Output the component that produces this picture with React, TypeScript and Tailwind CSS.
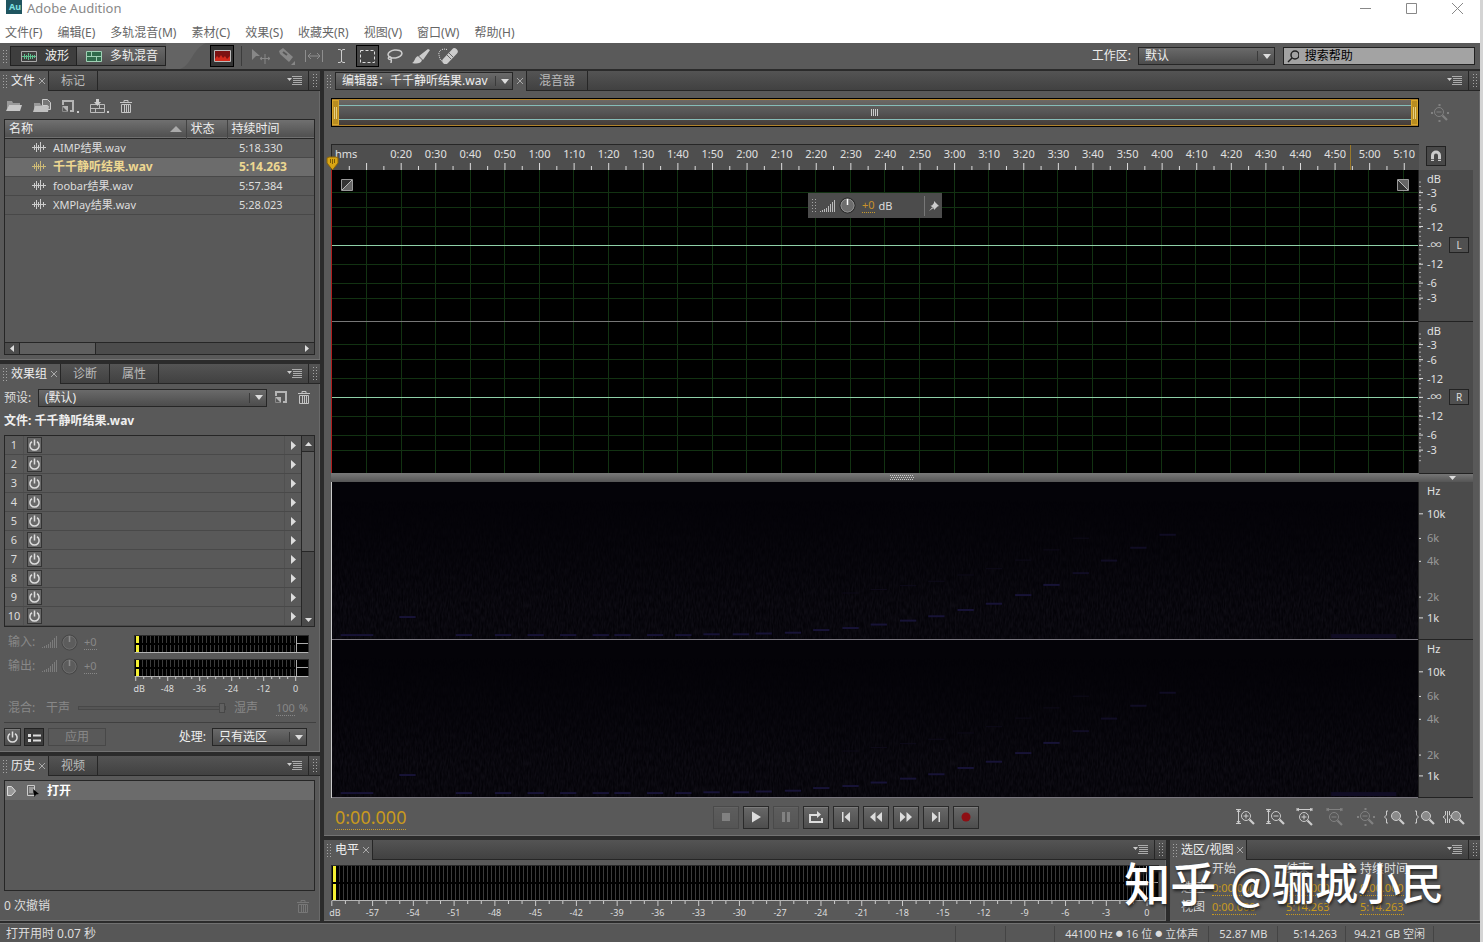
import type { ReactNode } from "react";

const files = [
    { name: "AIMP结果.wav", time: "5:18.330" },
    { name: "千千静听结果.wav", time: "5:14.263", active: true },
    { name: "foobar结果.wav", time: "5:57.384" },
    { name: "XMPlay结果.wav", time: "5:28.023" },
];

const menus = ["文件(F)", "编辑(E)", "多轨混音(M)", "素材(C)", "效果(S)", "收藏夹(R)", "视图(V)", "窗口(W)", "帮助(H)"];

const DURATION = 314.263;
const ticks = Array.from({ length: 62 }, (_, i) => (i + 1) * 5);
const pct = (n: number) => `${n}%`;
const at = (sec: number) => pct((sec / DURATION) * 100);
const clock = (sec: number) => `${Math.floor(sec / 60)}:${String(sec % 60).padStart(2, "0")}`;

// offsets are percentages of one channel's height
const dbMarks = [
    { y: 6, label: "dB" },
    { y: 15, label: "-3" },
    { y: 25, label: "-6" },
    { y: 37.5, label: "-12" },
    { y: 50, label: "-∞" },
    { y: 62.5, label: "-12" },
    { y: 75, label: "-6" },
    { y: 85, label: "-3" },
];
const hzMarks = [
    { y: 5.7, label: "Hz" },
    { y: 20.3, label: "10k" },
    { y: 36, label: "6k", dim: true },
    { y: 50.6, label: "4k", dim: true },
    { y: 73.4, label: "2k", dim: true },
    { y: 86.7, label: "1k" },
];

// [x %, y %] of the tones in the spectrogram
const tones = [
    [0.8, 97], [2.3, 97], [6.2, 85.5], [11.4, 97], [15, 97], [18, 97], [21, 97], [24, 97], [26, 97], [29, 97],
    [31.6, 97], [34.2, 96.5], [36.9, 96.5], [39, 96], [41.7, 95.5], [44.3, 93.8], [47, 92.5], [49.6, 90.3],
    [52.3, 87.8], [54.9, 85], [57.6, 81], [60.2, 77], [62.9, 71.5], [65.5, 65], [68.2, 57.5], [70.8, 49.5],
    [73.5, 41.3], [76.2, 33],
];

const selectLook = "appearance-none border border-[#262626] bg-linear-to-b from-[#6a6a6a] to-[#4c4c4c] text-[#eee] outline-none";
const buttonLook = "flex items-center justify-center border border-[#2a2a2a] bg-linear-to-b from-[#686868] to-[#4d4d4d] shadow-[inset_0_1px_0_#7c7c7c]";

function Grip() {
    return (
        <svg width="4" height="13" className="shrink-0" aria-hidden="true">
            {[0, 3, 6, 9, 12].map((y) => (
                <g key={y} fill="#a5a5a5">
                    <rect x="0" y={y} width="1" height="1" />
                    <rect x="3" y={y} width="1" height="1" />
                </g>
            ))}
        </svg>
    );
}

function Down() {
    return (
        <span className="pointer-events-none absolute inset-y-1 right-0 flex w-[18px] items-center justify-center border-l border-[#3a3a3a]">
            <svg width="8" height="5" aria-hidden="true"><path d="M0 0h8L4 5z" fill="#ddd" /></svg>
        </span>
    );
}

function Dropdown({ label, value, className }: { label: string; value: string; className: string }) {
    return (
        <div className={`relative ${className}`}>
            <select aria-label={label} className={`${selectLook} h-[18px] w-full pr-4 pl-1.5`}>
                <option>{value}</option>
            </select>
            <Down />
        </div>
    );
}

function TabBar({ active, rest, children }: { active: string; rest: string[]; children?: ReactNode }) {
    return (
        <div className="flex h-5 shrink-0 items-stretch border-b border-[#262626] bg-linear-to-b from-[#545454] to-[#414141]">
            <div className="-mb-px flex items-center gap-1 border-r border-[#262626] bg-[#595959] pr-[3px] pl-[3px]">
                <Grip />
                {children ?? <button className="text-[#eee]">{active}</button>}
                <button aria-label="关闭">
                    <svg width="6" height="6" stroke="#aaa"><path d="M0 0l6 6M6 0L0 6" /></svg>
                </button>
            </div>
            {rest.map((tab) => (
                <button key={tab} className="border-r border-[#262626] px-3 text-[#bbb]">{tab}</button>
            ))}
            <button aria-label="面板菜单" className="mr-1.5 ml-auto">
                <svg width="15" height="9" stroke="#ccc"><path d="M5 .5h10M6 2.500h9M6 4.500h9M6 6.500h9M5 8.500h10" opacity=".75" /><path d="M0 2h5L2.500 5z" fill="#ccc" stroke="none" /></svg>
            </button>
            <div className="flex w-3 items-center justify-center border-l border-[#262626]"><Grip /></div>
        </div>
    );
}

function Panel({ children, className = "" }: { children: ReactNode; className?: string }) {
    return <section className={`flex flex-col bg-[#595959] shadow-[inset_0_-1px_0_#737373,inset_-1px_0_0_#6a6a6a] ${className}`}>{children}</section>;
}

function Power() {
    return (
        <svg width="13" height="13" fill="none" stroke="#ddd" strokeWidth="1.500" aria-hidden="true">
            <path d="M4 2.600a4.600 4.600 0 1 0 5 0M6.500 0.500v6" />
        </svg>
    );
}

function Trash({ dim }: { dim?: boolean }) {
    return (
        <svg width="12" height="13" fill="none" stroke={dim ? "#777" : "#c4c4c4"} aria-hidden="true">
            <path d="M0 2.500h12M4 2V.5h4V2M1.500 4.500h9v8h-9zM4.500 5v7M6.500 5v7M8.500 5v7" />
        </svg>
    );
}

function NewItem() {
    return (
        <svg width="13" height="13" aria-hidden="true">
            <path d="M0 0h12v12H8v-2h2V2H2v3H0z" fill="#b5b5b5" />
            <path d="M0 6h6v6z" fill="#b5b5b5" />
            <path d="M.5 6v5.500H6" fill="none" stroke="#8a8a8a" />
        </svg>
    );
}

function Wave({ color }: { color: string }) {
    return (
        <svg width="14" height="11" stroke={color} aria-hidden="true">
            <path d="M0 5.500h14M2.500 3v5M4.500 1v9M6.500 3v5M8.500 0v10M11.500 3v5" />
        </svg>
    );
}

function Bars({ color }: { color: string }) {
    return (
        <svg width="15" height="12" stroke={color} aria-hidden="true">
            <path d="M.5 12v-1M2.500 12v-2M4.500 12V9M6.500 12V8M8.500 12V6M10.500 12V4M12.500 12V2M14.500 12V0" />
        </svg>
    );
}

function Knob({ dim }: { dim?: boolean }) {
    return (
        <svg width="17" height="17" aria-hidden="true">
            <circle cx="8.500" cy="8.500" r="7.500" fill={dim ? "#5c5c5c" : "#6d6d6d"} stroke={dim ? "#444" : "#222"} />
            <circle cx="8.500" cy="8.500" r="6.500" fill="none" stroke={dim ? "#6c6c6c" : "#909090"} />
            <path d="M8.500 2v6" stroke={dim ? "#8c8c8c" : "#fff"} strokeWidth="1.500" />
        </svg>
    );
}

function Meter({ tall }: { tall?: boolean }) {
    const row = "relative bg-[repeating-linear-gradient(90deg,#000_0_3px,#3b3b3b_3px_4px)]";
    return (
        <div className="relative flex flex-col gap-0.5 border border-[#2a2a2a] border-b-[#b5b5b5] bg-black">
            {[0, 1].map((ch) => (
                <div key={ch} className={`${row} ${tall ? "h-4" : "h-[7px]"}`}>
                    <div className="ml-px h-full w-[3px] bg-[#f4f032]" />
                </div>
            ))}
            <div className="absolute inset-y-0 right-0 w-3 border-l border-[#aaa] bg-black">
                <div className="h-1/2 border-b border-[#aaa]" />
            </div>
        </div>
    );
}

function FilesPanel() {
    return (
        <Panel>
            <TabBar active="文件" rest={["标记"]} />
            <div className="flex h-7 items-center gap-[11px] pt-0.5 pl-1.5">
                <button aria-label="打开">
                    <svg width="16" height="12"><path d="M1 1h5l1 2h7v2H3l-2 5z" fill="#999" /><path d="M0 11l3-6h13l-2 6z" fill="#c8c8c8" /></svg>
                </button>
                <button aria-label="导入">
                    <svg width="18" height="14"><path d="M1 4h6l1 2h7v2H3l-2 4z" fill="#999" /><path d="M9.500.5h5l3 3v7h-3v-4h-5z" fill="#777" stroke="#ccc" /><path d="M0 13l2-6h14l-1 6z" fill="#c0c0c0" /></svg>
                </button>
                <button aria-label="新建" className="flex items-end gap-0.5">
                    <NewItem /><span className="h-0.5 w-0.5 bg-[#ccc]" />
                </button>
                <button aria-label="插入到多轨">
                    <svg width="19" height="14" fill="none" stroke="#bbb"><path d="M.5 5.500h14v8H.5zM1 9.500h13M5.500 10v3M9.500 6v3" /><path d="M4 3h2V0h3v3h2L7.500 7z" fill="#ccc" stroke="none" /><path d="M17 12h2v2h-2z" fill="#ccc" stroke="none" /></svg>
                </button>
                <button aria-label="删除"><Trash /></button>
            </div>
            <div className="mr-[5px] mb-[5px] ml-1 flex h-[236px] flex-col border border-[#262626] bg-[#595959]">
                <table className="w-full table-fixed border-collapse text-left">
                    <thead>
                        <tr className="h-[18px] border-b border-[#262626] bg-linear-to-b from-[#707070] to-[#505050] text-[#eee]">
                            <th className="pl-1 font-normal">
                                <span className="flex items-center justify-between pr-1">名称<svg width="12" height="6"><path d="M0 6l6-6 6 6z" fill="#aaa" /></svg></span>
                            </th>
                            <th className="w-[41px] border-l border-[#444] pl-1 font-normal">状态</th>
                            <th className="w-[87px] border-l border-[#444] pl-1 font-normal">持续时间</th>
                        </tr>
                    </thead>
                    <tbody>
                        {files.map((f) => (
                            <tr key={f.name} className={`h-[19px] border-b border-[#484848] text-[11px] ${f.active ? "bg-[#6c6c6c] font-bold text-[#edd791]" : "text-[#ddd]"}`}>
                                <td className="pl-[27px]" colSpan={2}>
                                    <span className="flex items-center gap-[7px]">
                                        <Wave color={f.active ? "#cdb975" : "#ccc"} />
                                        <span className={f.active ? "text-xs" : ""}>{f.name}</span>
                                    </span>
                                </td>
                                <td className={`pl-3 ${f.active ? "text-xs" : ""}`}>{f.time}</td>
                            </tr>
                        ))}
                    </tbody>
                </table>
                <div className="mt-auto flex h-3 items-stretch border-t border-[#262626] bg-[#4c4c4c]">
                    <span className="flex w-3.5 items-center justify-center"><svg width="4" height="7"><path d="M4 0v7L0 3.500z" fill="#ddd" /></svg></span>
                    <span className="w-[77px] border-x border-[#262626] bg-[#5f5f5f]" />
                    <span className="ml-auto flex w-3.5 items-center justify-center"><svg width="4" height="7"><path d="M0 0v7l4-3.500z" fill="#ddd" /></svg></span>
                </div>
            </div>
        </Panel>
    );
}

function EffectsPanel() {
    return (
        <Panel>
            <TabBar active="效果组" rest={["诊断", "属性"]} />
            <div className="flex h-[27px] items-center pr-2 pl-1 text-[#ddd]">
                <span className="w-[34px] whitespace-nowrap">预设:</span>
                <Dropdown label="预设" value="(默认)" className="flex-1" />
                <button aria-label="保存预设" className="ml-2"><NewItem /></button>
                <button aria-label="删除预设" className="mr-0.5 ml-2.5"><Trash /></button>
            </div>
            <div className="mb-[5px] h-[19px] pl-1 leading-[19px] font-bold text-[#eee]">文件: 千千静听结果.wav</div>
            <div className="mr-[5px] mb-px ml-1 flex border border-[#262626]">
                <ol className="flex-1">
                    {[1, 2, 3, 4, 5, 6, 7, 8, 9, 10].map((n) => (
                        <li key={n} className="flex h-[19px] items-stretch border-b border-[#494949] text-[11px] text-[#ddd]">
                            <span className="w-[19px] border-r border-[#505050] text-center leading-[18px]">{n}</span>
                            <button aria-label={`开关 ${n}`} className="my-px ml-[3px] flex w-[15px] items-center justify-center border border-[#333] bg-[#686868]"><Power /></button>
                            <button aria-label={`选择效果 ${n}`} className="ml-auto flex w-[17px] items-center justify-center border-l border-[#505050]">
                                <svg width="5" height="9"><path d="M0 0v9l5-4.500z" fill="#ddd" /></svg>
                            </button>
                        </li>
                    ))}
                </ol>
                <div className="flex w-[13px] flex-col items-center border-l border-[#262626] bg-[#4a4a4a]">
                    <span className="flex h-[15px] items-center"><svg width="7" height="4"><path d="M0 4h7L3.500 0z" fill="#ddd" /></svg></span>
                    <span className="h-[101px] w-full border-y border-[#262626] bg-[#5c5c5c]" />
                    <span className="mt-auto flex h-3 items-center"><svg width="7" height="4"><path d="M0 0h7L3.500 4z" fill="#ddd" /></svg></span>
                </div>
            </div>
            <div className="flex pt-[7px] pr-[11px] pl-2">
                <div className="flex w-[126px] flex-col gap-1.5 text-[#888]">
                    {["输入", "输出"].map((l) => (
                        <div key={l} className="flex h-4 items-center pb-0.5 mb-0.5">
                            <span className="w-[34px]">{l}:</span>
                            <Bars color="#7c7c7c" />
                            <span className="mr-1.5 ml-1"><Knob dim /></span>
                            <span className="border-b border-dotted border-[#888] text-[11px] leading-[14px]">+0</span>
                        </div>
                    ))}
                </div>
                <div className="flex flex-1 flex-col gap-1.5">
                    <Meter />
                    <Meter />
                    <svg className="-mt-1.5 h-[18px] w-full overflow-visible text-[9px]" fill="#ddd" textAnchor="middle">
                        {Array.from({ length: 21 }, (_, i) => (
                            <line key={i} x1={pct(1 + i * 4.57)} x2={pct(1 + i * 4.57)} y1="0" y2={i % 4 ? 2 : 4} stroke="#ccc" />
                        ))}
                        {["dB", "-48", "-36", "-24", "-12", "0"].map((t, i) => (
                            <text key={t} x={pct(i ? 0.8 + i * 18.300 : 3)} y="15">{t}</text>
                        ))}
                    </svg>
                </div>
            </div>
            <label className="mt-[3px] flex h-5 items-center px-2 text-[#888]">
                <span className="w-[38px]">混合:</span>
                <span>干声</span>
                <input type="range" defaultValue="100" disabled className="mx-2 h-1 min-w-0 flex-1 appearance-none border border-[#484848] bg-[#555] [&::-webkit-slider-thumb]:h-2.5 [&::-webkit-slider-thumb]:w-1.5 [&::-webkit-slider-thumb]:appearance-none [&::-webkit-slider-thumb]:border [&::-webkit-slider-thumb]:border-[#484848] [&::-webkit-slider-thumb]:bg-[#606060]" />
                <span>湿声</span>
                <span className="mr-1 ml-[18px] border-b border-dotted border-[#888] text-[11px] leading-[14px]">100</span>
                <span className="mr-1 text-[11px]">%</span>
            </label>
            <div className="mx-1 mt-1 mb-1 border-t border-[#404040]" />
            <div className="mb-[5px] flex h-5 items-center pr-[13px] pl-1 text-[#eee]">
                <button aria-label="效果组开关" className={`${buttonLook} h-[18px] w-[17px]`}><Power /></button>
                <button aria-label="列表" className="ml-[3px] flex h-[18px] w-5 items-center justify-center border border-[#222] bg-[#3c3c3c]">
                    <svg width="13" height="9" fill="#ddd"><path d="M0 1h3v3H0zM5 1.500h8v2H5zM0 6h3v3H0zM5 6.500h8v2H5z" /></svg>
                </button>
                <button disabled className="ml-1 h-[18px] w-[58px] border border-[#484848] leading-4 text-[#888]">应用</button>
                <span className="mr-1.5 ml-auto">处理:</span>
                <Dropdown label="处理" value="只有选区" className="w-[95px]" />
            </div>
        </Panel>
    );
}

function HistoryPanel() {
    return (
        <Panel className="flex-1">
            <TabBar active="历史" rest={["视频"]} />
            <ul className="mt-1 mr-[5px] ml-1 min-h-[111px] flex-1 border border-[#262626]">
                <li className="flex h-[19px] items-center bg-[#6b6b6b] pl-0.5 font-bold text-white">
                    <svg width="9" height="10"><path d="M.5.5h4l4 4.500-4 4.500h-4z" fill="#999" stroke="#ddd" /></svg>
                    <svg width="14" height="14" className="mr-[7px] ml-2.5"><path d="M1.500 1.500h7v10h-7zM3 4h5M3 6h5M3 8h4" fill="#666" stroke="#ccc" /><path d="M7 5l6 5-3 .5L8.500 13z" fill="#000" /></svg>
                    打开
                </li>
            </ul>
            <div className="flex h-[30px] items-center justify-between pr-[11px] pl-1 text-[#ddd]">
                <span>0 次撤销</span>
                <button aria-label="清除历史" disabled><Trash dim /></button>
            </div>
        </Panel>
    );
}

function ScaleDb({ side }: { side: string }) {
    return (
        <div className="relative flex flex-1 items-center justify-end border-b border-[#222] bg-[#4b4b4b] pr-1">
            <svg className="absolute inset-0 h-full w-full text-[11px]" fill="#e0e0e0">
                {Array.from({ length: 29 }, (_, i) => (
                    <line key={i} x1="0" x2="2" y1={pct(8 + i * 3)} y2={pct(8 + i * 3)} stroke="#aaa" />
                ))}
                {dbMarks.map((m) => (
                    <g key={m.y}>
                        {m.label !== "dB" && <line x1="0" x2="4" y1={pct(m.y)} y2={pct(m.y)} stroke="#ddd" />}
                        <text x="8" y={pct(m.y)} dy="4">{m.label}</text>
                    </g>
                ))}
            </svg>
            <button className="relative h-4 w-5 border border-[#222] bg-[#505050] text-[10px] leading-3 text-[#ddd]">{side}</button>
        </div>
    );
}

function ScaleHz() {
    return (
        <div className="flex-1 border-b border-[#222] bg-[#4b4b4b]">
            <svg className="h-full w-full text-[11px]">
                {hzMarks.map((m) => (
                    <g key={m.y}>
                        {m.label !== "Hz" && <line x1="0" x2={m.dim ? 2 : 4} y1={pct(m.y)} y2={pct(m.y)} stroke="#ddd" />}
                        <text x="8" y={pct(m.y)} dy="4" fill={m.dim ? "#999" : "#e0e0e0"}>{m.label}</text>
                    </g>
                ))}
            </svg>
        </div>
    );
}

function WaveChannel() {
    return (
        <div className="flex-1 border-b border-[#777]">
            <svg className="h-full w-full" shapeRendering="crispEdges" aria-hidden="true">
                {ticks.filter((t) => t % 10 === 0).map((t) => (
                    <line key={t} x1={at(t)} x2={at(t)} y1="0" y2="100%" stroke="#123212" />
                ))}
                {dbMarks.slice(1).map((m) => (
                    <line key={m.y} x1="0" x2="100%" y1={pct(m.y)} y2={pct(m.y)} stroke={m.y === 50 ? "#8fd0a8" : "#123212"} />
                ))}
            </svg>
        </div>
    );
}

function SpectrumChannel() {
    return (
        <div className="relative flex-1 border-b border-[#77747c]">
            <svg className="h-full w-full" aria-hidden="true">
                <filter id="grain" x="0" y="0" width="100%" height="100%">
                    <feTurbulence type="fractalNoise" baseFrequency="0.6 0.15" numOctaves="2" />
                    <feColorMatrix values="0 0 0 0 0.15  0 0 0 0 0.13  0 0 0 0 0.2  0.5 0 0 0 -0.1" />
                </filter>
                <linearGradient id="fade" x1="0" y1="0" x2="0" y2="1">
                    <stop offset="0.1" stopColor="#000" />
                    <stop offset="0.8" stopColor="#fff" />
                </linearGradient>
                <mask id="rise"><rect width="100%" height="100%" fill="url(#fade)" /></mask>
                <g mask="url(#rise)">
                    <rect width="100%" height="100%" filter="url(#grain)" opacity="0.35" />
                </g>
                {tones.map(([x, y]) => (
                    <rect key={x} x={pct(x)} y={pct(y)} width="1.500%" height="2" fill="#171336" opacity={y < 60 ? 0.6 : 1} />
                ))}
                {tones.slice(16, 25).map(([x, y]) => (
                    <rect key={x} x={pct(x)} y={pct(y - 22)} width="1.500%" height="1" fill="#0e0b1a" />
                ))}
                <rect x="92%" y="97%" width="6%" height="4" fill="#100c24" />
            </svg>
        </div>
    );
}

// magnifier with a sign inside, plus an arrow or bracket beside it
function ZoomIcon({ kind }: { kind: string }) {
    const plus = kind === "v+" || kind === "h+";
    const minus = kind === "v-" || kind === "h-" || kind === "full";
    return (
        <svg width="24" height="18" fill="none" stroke="#ccc" aria-hidden="true">
            {kind[0] === "v" && <path d="M5.500 2v13M3 1.500h5M3 15.500h5M4 4l1.500-2L7 4M4 13l1.500 2L7 13" />}
            {kind[0] === "h" && <path d="M4 1.500h15M4 0v3M19 0v3M6 0L4 1.500 6 3M17 0l2 1.500L17 3" />}
            {kind === "full" && <path d="M4 9h2M20 9h2M12.500 0v2M12.500 16v2" strokeWidth="2" />}
            {kind === "in" && <path d="M5 3H3.500v4L1.500 9l2 2v4H5" />}
            {kind === "out" && <path d="M2 3h1.500v4l2 2-2 2v4H2" />}
            {kind === "sel" && <path d="M2.500 3v4L0 9l2.500 2v4M4.500 3v12M6.500 3v4L9 9l-2.500 2v4" />}
            <g transform={kind[0] === "h" ? "translate(-1 1)" : kind === "full" ? "translate(0 0)" : "translate(1 0)"}>
                <circle cx="12" cy="8" r="4.500" fill={plus || minus ? "none" : "#8a8a8a"} />
                <path d="M15.500 11.500l4.500 4.500" strokeWidth="2.200" />
                {(plus || minus) && <path d="M9.500 8h5" />}
                {plus && <path d="M12 5.500v5" />}
            </g>
        </svg>
    );
}

const transport = [
    { label: "停止", off: true, art: <rect x="4" y="3" width="8" height="8" /> },
    { label: "播放", art: <path d="M4 1.500l9 5.500-9 5.500z" /> },
    { label: "暂停", off: true, art: <path d="M4 2h3v10H4zM9 2h3v10H9z" /> },
    { label: "循环播放", art: <path d="M1 4h8V1l4 3.500L9 8V6H3v5h10V8h2v5H1z" /> },
    { label: "转到开头", art: <path d="M4 2h1.500v10H4zM12 2v10L6.500 7z" /> },
    { label: "快退", art: <path d="M7.500 2v10L2 7zM14 2v10L8.500 7z" /> },
    { label: "快进", art: <path d="M2 2v10l5.500-5zM8.500 2v10L14 7z" /> },
    { label: "转到结尾", art: <path d="M4 2v10l5.500-5zM10.500 2H12v10h-1.500z" /> },
    { label: "录制", art: <circle cx="8" cy="7" r="4.500" fill="#8e0f14" /> },
];

const zooms = [
    { label: "放大(幅度)", kind: "v+" },
    { label: "缩小(幅度)", kind: "v-" },
    { label: "放大(时间)", kind: "h+" },
    { label: "缩小(时间)", kind: "h-", off: true },
    { label: "全部缩小", kind: "full", off: true },
    { label: "放大入点", kind: "in" },
    { label: "放大出点", kind: "out" },
    { label: "缩放至选区", kind: "sel" },
];

function EditorPanel() {
    return (
        <Panel className="flex-1">
            <TabBar active="" rest={["混音器"]}>
                <Dropdown label="编辑器" value="编辑器：千千静听结果.wav" className="w-[178px]" />
            </TabBar>
            <div className="flex pt-[7px] pr-[7px] pl-[7px]">
                <div className="flex h-[29px] flex-1 border border-black bg-[#b0832c]">
                    <div className="my-px flex flex-1 items-stretch justify-between bg-linear-to-b from-[#6c6864] via-[#555] to-[#443c38]">
                        <span className="flex w-[7px] items-center justify-center border border-[#d9a62a] bg-[#b98d20]"><span className="h-3 w-[3px] border-x border-[#e8d080]" /></span>
                        <span className="my-[5px] flex flex-1 items-center justify-center border-y border-[#86bdb8]">
                            <svg width="8" height="7" stroke="#ccc"><path d="M.5 0v7M2.500 0v7M4.500 0v7M6.500 0v7" /></svg>
                        </span>
                        <span className="flex w-[7px] items-center justify-center border border-[#d9a62a] bg-[#b98d20]"><span className="h-3 w-[3px] border-x border-[#e8d080]" /></span>
                    </div>
                </div>
                <button aria-label="全部缩小" disabled className="flex w-[54px] items-center pl-2 opacity-35"><ZoomIcon kind="full" /></button>
            </div>
            <div className="mt-[17px] flex h-[26px] px-[7px]">
                <div className="relative flex-1 border-t border-l border-[#262626] bg-[#4e4e4e]">
                    <svg className="h-full w-full text-[11px]" fill="#e0e0e0" textAnchor="middle">
                        <text x="3" y="13" textAnchor="start">hms</text>
                        {ticks.map((t) => (
                            <g key={t}>
                                <line x1={at(t)} x2={at(t)} y1={t % 10 ? 21 : 18} y2="25" stroke="#ddd" />
                                {t >= 20 && t % 10 === 0 && <text x={at(t)} y="13">{clock(t)}</text>}
                            </g>
                        ))}
                        <line x1="93.700%" x2="93.700%" y1="0" y2="25" stroke="#9c7a2a" />
                    </svg>
                    <svg width="13" height="15" className="absolute -bottom-px -left-1.5">
                        <path d="M1 2l2-1h7l2 1v5l-5.500 7L1 7z" fill="#d9a514" stroke="#8a6408" />
                        <path d="M4.500 3v4M6.500 3v5M8.500 3v4" stroke="#7a5a08" />
                    </svg>
                </div>
                <div className="w-[54px] pt-0.5 pl-[7px]">
                    <button aria-label="对齐" className="flex h-5 w-5 items-center justify-center border border-[#222] bg-[#484848]">
                        <svg width="12" height="12" fill="none"><path d="M2.500 11V5.500a3.500 3.500 0 0 1 7 0V11" stroke="#ccc" strokeWidth="3" /><path d="M1 9.500h3M8 9.500h3" stroke="#666" /></svg>
                    </button>
                </div>
            </div>
            <div className="flex min-h-0 flex-[303] px-[7px]">
                <div className="relative flex min-h-[240px] flex-1 flex-col border-r border-l border-r-[#222] border-l-[#b01c1c] bg-black">
                    <WaveChannel />
                    <WaveChannel />
                    <svg width="12" height="12" className="absolute top-[9px] left-[9px]"><path d="M.5.5h11v11H.5z" fill="#333" stroke="#999" /><path d="M1 11L11 1v10z" fill="#666" /><path d="M1 11L11 1" stroke="#bbb" /></svg>
                    <svg width="12" height="12" className="absolute top-[9px] right-[9px]"><path d="M.5.5h11v11H.5z" fill="#333" stroke="#999" /><path d="M1 1l10 10V1z" fill="#666" /><path d="M1 1l10 10" stroke="#bbb" /></svg>
                    <div className="absolute inset-x-0 top-[23px] mx-auto flex h-[25px] w-[134px] items-center bg-[#4c4c4c] pl-1">
                        <Grip />
                        <span className="mr-1 ml-1"><Bars color="#bbb" /></span>
                        <Knob />
                        <span className="mr-1 ml-1.5 border-b border-dotted border-[#c89b2c] text-[11px] leading-[14px] text-[#c8922c]">+0</span>
                        <span className="text-[11px] text-[#ddd]">dB</span>
                        <button aria-label="固定" className="ml-auto flex h-5 w-[18px] items-center justify-center border-l border-[#777]">
                            <svg width="10" height="10"><path d="M5 0l5 5-1.500.5L6 8V9L1.500 4.500H3L5 2zM3.500 6L0 10l4.500-3z" fill="#ccc" /></svg>
                        </button>
                    </div>
                </div>
                <div className="flex w-[54px] flex-col">
                    <ScaleDb side="L" />
                    <ScaleDb side="R" />
                </div>
            </div>
            <div className="mx-[7px] flex h-[9px] shrink-0 items-center bg-linear-to-b from-[#7a7a7a] to-[#555]">
                <span className="w-6" />
                <svg width="24" height="5" className="mx-auto"><path d="M0 .5h24M1 2.500h23M0 4.500h24" stroke="#ccc" strokeDasharray="1 1" /></svg>
                <svg width="7" height="4" className="mr-[17px]"><path d="M0 0h7L3.500 4z" fill="#ddd" /></svg>
            </div>
            <div className="flex min-h-0 flex-[315] px-[7px]">
                <div className="flex min-h-[240px] flex-1 flex-col border-r border-l border-r-[#222] border-l-[#ccc] bg-[#040308]">
                    <SpectrumChannel />
                    <SpectrumChannel />
                </div>
                <div className="flex w-[54px] flex-col">
                    <ScaleHz />
                    <ScaleHz />
                </div>
            </div>
            <div className="flex h-[38px] shrink-0 items-center pr-[13px] pl-[11px]">
                <div className="flex-[378]">
                    <span className="border-b border-dotted border-[#c89b2c] text-lg leading-5 text-[#c8991e]">0:00.000</span>
                </div>
                <div className="flex gap-1">
                    {transport.map((b) => (
                        <button key={b.label} aria-label={b.label} disabled={b.off} className={`${buttonLook} h-[23px] w-[26px] disabled:opacity-30`}>
                            <svg width="16" height="14" fill="#ddd">{b.art}</svg>
                        </button>
                    ))}
                </div>
                <div className="flex flex-[487] justify-end gap-1.5">
                    {zooms.map((z) => (
                        <button key={z.label} aria-label={z.label} disabled={z.off} className="disabled:opacity-35"><ZoomIcon kind={z.kind} /></button>
                    ))}
                </div>
            </div>
        </Panel>
    );
}

function LevelsPanel() {
    return (
        <Panel className="min-w-0 flex-1">
            <TabBar active="电平" rest={[]} />
            <div className="px-[7px] pt-[5px] pb-[3px]">
                <Meter tall />
                <svg className="h-[17px] w-full overflow-visible text-[9px]" fill="#ddd" textAnchor="middle">
                    {Array.from({ length: 61 }, (_, i) => (
                        <line key={i} x1={pct(0.1 + i * 1.641)} x2={pct(0.1 + i * 1.641)} y1="0" y2={i % 3 ? 3 : 5} stroke="#ccc" />
                    ))}
                    <text x="4" y="15">dB</text>
                    {Array.from({ length: 20 }, (_, i) => (
                        <text key={i} x={pct(5 + i * 4.923)} y="15">{i * 3 - 57}</text>
                    ))}
                </svg>
            </div>
        </Panel>
    );
}

function SelectionPanel() {
    const rows = [
        ["选区", "0:00.000", "0:00.000", "0:00.000"],
        ["视图", "0:00.000", "5:14.263", "5:14.263"],
    ];
    return (
        <Panel className="w-[310px]">
            <TabBar active="选区/视图" rest={[]} />
            <table className="ml-[11px] w-[253px] table-fixed text-left text-[#ddd]">
                <thead>
                    <tr className="h-[18px]">
                        <th className="w-[31px]" />
                        <th className="font-normal">开始</th>
                        <th className="font-normal">结束</th>
                        <th className="font-normal">持续时间</th>
                    </tr>
                </thead>
                <tbody>
                    {rows.map(([head, ...cells]) => (
                        <tr key={head} className="h-[19px]">
                            <th className="font-normal">{head}</th>
                            {cells.map((c, i) => (
                                <td key={i} className="text-[11px] leading-3 text-[#c8991e]"><span className="border-b border-dotted border-[#c8991e]">{c}</span></td>
                            ))}
                        </tr>
                    ))}
                </tbody>
            </table>
        </Panel>
    );
}

function Toolbar() {
    const faded = "opacity-40";
    return (
        <div className="flex h-[26px] items-center bg-[#5a5a5a] pr-[5px] pl-[3px] text-[#eee]">
            <Grip />
            <div className="ml-[3px] flex h-5 border border-[#222]">
                <button className="flex w-[65px] items-center gap-2 bg-[#3e3e3e] pl-2.5">
                    <svg width="16" height="11" fill="none" stroke="#5fc08f"><path d="M.5.5h15v10H.5z" stroke="#aaa" /><path d="M1 5.500h14M3.500 3v5M5.500 4v4M7.500 2v7M9.500 3v5M11.500 4v4M13.500 4v3" /></svg>
                    波形
                </button>
                <button className="flex w-[89px] items-center gap-2 border-l border-[#222] bg-linear-to-b from-[#696969] to-[#4e4e4e] pl-[9px] whitespace-nowrap">
                    <svg width="16" height="11" fill="#2f6b4b" stroke="#9fd0b4"><path d="M.5.5h15v10H.5zM0 5.500h16M10.500 6v5M5.500 1v4" /></svg>
                    多轨混音
                </button>
            </div>
            <svg width="44" height="26"><path d="M14 26C26 22 26 6 40 0H0v26z" fill="#646464" /></svg>
            <button aria-label="显示频谱" className="flex h-[22px] w-6 items-center justify-center border border-black bg-[#333]">
                <svg width="17" height="12"><path d="M.5.5h16v11H.5z" fill="#7c1212" stroke="#bbb" /><path d="M1 9l2-3 2 2 2-3 2 3 2-2 2 3 3-3v5H1z" fill="#d42a1c" /></svg>
            </button>
            <span className="mr-1.5 ml-[7px] h-5 w-px bg-[#3c3c3c]" />
            <div className="flex items-center gap-[3px]">
                <button aria-label="移动" className={`flex w-6 justify-center ${faded}`}>
                    <svg width="19" height="15" fill="#ccc"><path d="M1 0l8 7H5l-4 4z" /><path d="M9 9.500h10M14 5v10M11 8l-2 1.500L11 11M17 8l2 1.500L17 11" fill="none" stroke="#ccc" /></svg>
                </button>
                <button aria-label="切割" className={`flex w-6 justify-center ${faded}`}>
                    <svg width="18" height="17" fill="#ccc"><path d="M1 3l4-3 10 9-4 5L2 6z" /><path d="M5 4l4 3" stroke="#555" strokeWidth="2" /><path d="M17 13v4h-4z" /></svg>
                </button>
                <button aria-label="滑动" className={`flex w-6 justify-center ${faded}`}>
                    <svg width="18" height="12" fill="none" stroke="#ddd"><path d="M.5 0v12M17.500 0v12M3 6h12M6 3L3 6l3 3M12 3l3 3-3 3" /></svg>
                </button>
                <button aria-label="时间选择" className="flex w-6 justify-center">
                    <svg width="9" height="14" fill="none" stroke="#ccc"><path d="M1 .5h2l1.500 1L6 .5h2M4.500 1v12M1 13.500h2l1.500-1 1.500 1h2" /></svg>
                </button>
                <button aria-label="框选" className="flex h-[22px] w-[23px] items-center justify-center border border-black bg-[#444]">
                    <svg width="15" height="13" fill="none" stroke="#ddd"><path d="M.5.5h14v12H.5z" strokeDasharray="3 2" /></svg>
                </button>
                <button aria-label="套索" className="flex w-6 justify-center">
                    <svg width="17" height="15" fill="none" stroke="#ccc" strokeWidth="1.500"><ellipse cx="9" cy="5" rx="7" ry="4" transform="rotate(-8 9 5)" /><path d="M3 8c-2 2 1 3 2 2s-1-3-2-2M5 10c1 1 0 3 0 4" /></svg>
                </button>
                <button aria-label="画笔" className="flex w-6 justify-center">
                    <svg width="18" height="15" fill="#ccc"><path d="M16 0l2 1-7 10-4-4zM6 7l4 4c-1 4-6 4-10 3 3-1 2-5 6-7z" /></svg>
                </button>
                <button aria-label="污点修复" className="flex w-6 justify-center">
                    <svg width="20" height="16"><path d="M5 11L14 1.500a3 3 0 0 1 5 4L10 15a3 3 0 0 1-5-4z" fill="#ccc" /><path d="M9 7l4 4M11 5l4 4" stroke="#666" /><path d="M9 1.500C4 0 0 3 1 7s1 5 3 6" fill="none" stroke="#ddd" strokeDasharray="1 1" /></svg>
                </button>
            </div>
            <span className="mr-[7px] ml-auto">工作区:</span>
            <Dropdown label="工作区" value="默认" className="w-[137px]" />
            <label className="ml-2 flex h-[18px] w-[192px] items-center border border-[#222] bg-[#a3a3a3] pl-[3px]">
                <svg width="13" height="13" fill="none" stroke="#222" strokeWidth="1.500"><circle cx="8" cy="5" r="4" /><path d="M5 8l-4 4" /></svg>
                <input type="search" aria-label="搜索帮助" placeholder="搜索帮助" className="ml-1.5 w-full min-w-0 bg-transparent text-black outline-none placeholder:text-black" />
            </label>
        </div>
    );
}

export default function App() {
    const dot = <span className="text-[7px]">●</span>;
    return (
        <div className="relative flex min-h-screen flex-col border-r-[3px] border-[#d4d4d4] bg-[#2b2b2b] font-['Noto_Sans','Noto_Sans_CJK_SC',sans-serif] text-xs leading-4">
            <header className="bg-white text-[#666]">
                <div className="flex h-4 items-center pr-[17px] pl-1.5">
                    <svg width="16" height="16" className="-mt-0.5" aria-hidden="true">
                        <rect width="16" height="15" fill="#1f5560" />
                        <text x="3" y="11" fill="#7fe0e0" className="text-[9px] font-bold">Au</text>
                    </svg>
                    <h1 className="ml-[5px] text-[13px] leading-[14px] text-[#888]">Adobe Audition</h1>
                    <div className="ml-auto flex items-center gap-[35px] text-[#888]">
                        <button aria-label="最小化"><svg width="11" height="11" stroke="currentColor"><path d="M0 5.500h11" /></svg></button>
                        <button aria-label="最大化"><svg width="11" height="11" fill="none" stroke="currentColor"><path d="M.5.5h10v10H.5z" /></svg></button>
                        <button aria-label="关闭"><svg width="11" height="11" stroke="currentColor"><path d="M0 0l11 11M11 0L0 11" /></svg></button>
                    </div>
                </div>
                <nav className="flex h-[27px] items-center gap-[15px] pt-1.5 pl-[5px]">
                    {menus.map((m) => (
                        <button key={m}>{m}</button>
                    ))}
                </nav>
            </header>
            <Toolbar />
            <main className="flex flex-1 gap-1 py-0.5">
                <div className="flex w-80 shrink-0 flex-col gap-1">
                    <FilesPanel />
                    <EffectsPanel />
                    <HistoryPanel />
                </div>
                <div className="flex min-w-0 flex-1 flex-col gap-1">
                    <EditorPanel />
                    <div className="flex gap-1">
                        <LevelsPanel />
                        <SelectionPanel />
                    </div>
                </div>
            </main>
            <footer className="flex h-5 items-center border-t border-[#707070] bg-[#575757] pl-1.5 text-[#ddd]">
                <span>打开用时 0.07 秒</span>
                <div className="ml-auto flex items-center text-[11px]">
                    <span className="h-4 w-[50px] border-l border-[#444]" />
                    <span className="h-4 w-[49px] border-l border-[#444]" />
                    <span className="flex items-center gap-[3px] border-l border-[#444] px-2.5">44100 Hz {dot} 16 位 {dot} 立体声</span>
                    <span className="border-l border-[#444] px-2.5">52.87 MB</span>
                    <span className="border-l border-[#444] pr-2 pl-[15px]">5:14.263</span>
                    <span className="mr-[46px] border-x border-[#444] px-2">94.21 GB 空闲</span>
                </div>
            </footer>
            <div className="pointer-events-none absolute right-9 bottom-8 flex items-center gap-3.5 font-['Noto_Sans_CJK_SC',sans-serif] leading-[60px] font-medium text-white [text-shadow:1px_2px_3px_#222]">
                <span className="text-[46px]">知乎</span>
                <span className="text-[43px]">@骊城小民</span>
            </div>
        </div>
    );
}
